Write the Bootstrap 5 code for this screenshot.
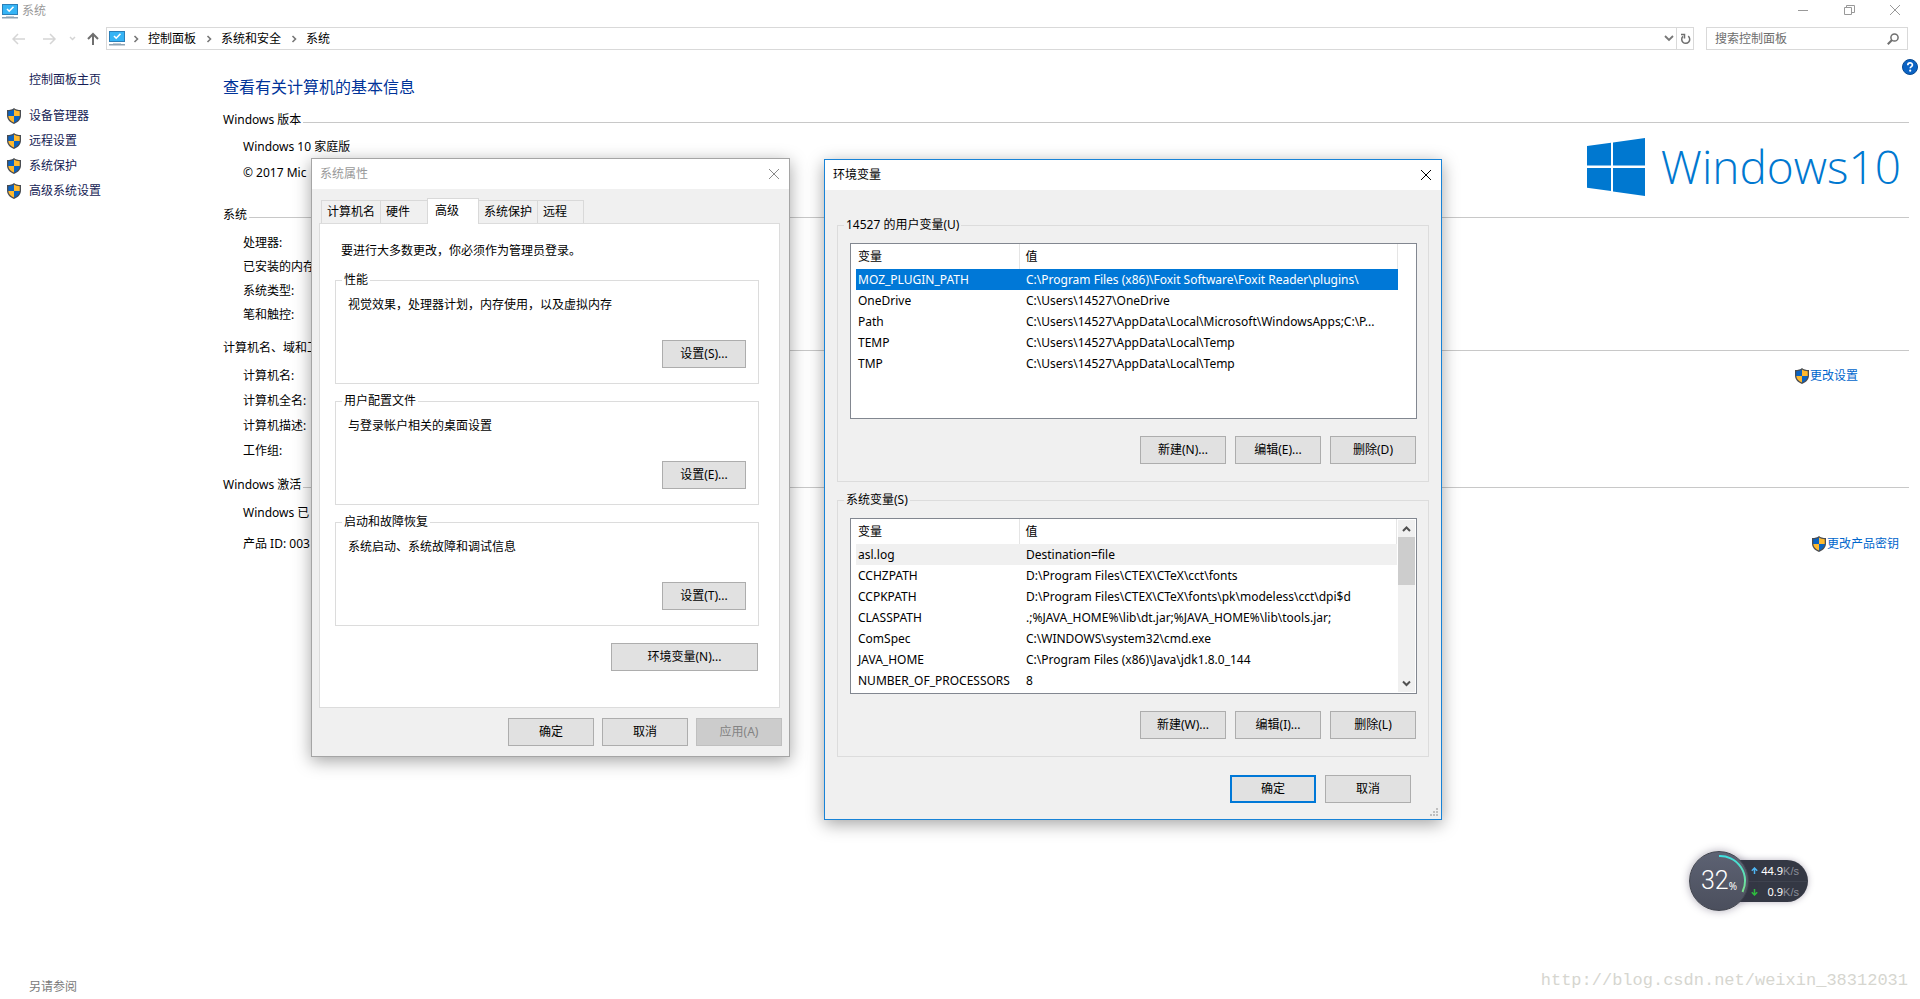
<!DOCTYPE html>
<html lang="zh-CN">
<head>
<meta charset="utf-8">
<meta name="viewport" content="width=device-width, initial-scale=1">
<title>系统</title>
<link rel="stylesheet" href="https://cdn.jsdelivr.net/npm/bootstrap@5.3.0/dist/css/bootstrap.min.css">
<style>
  body { font: 12px/16px "Noto Sans", "Noto Sans CJK SC", sans-serif; color: #000; background: #fff; }
  a { text-decoration: none; }
  svg { display: block; flex: none; }
  button { font: inherit; color: inherit; }
  .bare { border: 0; background: none; padding: 0; }

  /* window frame */
  .caption { height: 22px; padding: 0 2px; color: #999; }
  .caption-btn { width: 46px; height: 19px; }
  .nav-line { padding: 5px 12px 0 12px; height: 28px; }
  .nav-arrows { width: 94px; }
  .address, .search { height: 23px; border: 1px solid #d9d9d9; }
  .address { padding-left: 2px; }
  .address a { color: #000; }
  .address .sep { margin: 0 9px 0 10px; }
  .address .reload { width: 17px; border-left: 1px solid #d9d9d9; }
  .history { padding: 0 2px; }
  .search { width: 202px; margin-left: 12px; padding: 0 8px 0 8px; }
  .search input { border: 0; outline: 0; padding: 0; width: 100%; min-width: 0; color: #6d6d6d; }
  .search input::placeholder { color: #6d6d6d; opacity: 1; }

  /* left column */
  .tasks { width: 223px; padding: 22px 0 4px 7px; flex: none; }
  .tasks a { color: #151c55; }
  .tasks li { line-height: 25px; }
  .tasks ul { margin: 15px 0 0; }
  .indent { padding-left: 22px; }
  .see-also { color: #7a7a7a; }

  /* details */
  .details { padding: 10px 2px 0 0; }
  .page-title { font-size: 16px; line-height: 20px; color: #003399; margin: 17px 0 15px; font-weight: 400; }
  .help { margin-top: -1px; }
  .sect { margin-right: 9px; }
  .sect h2 { font-size: 12px; line-height: 16px; margin: 0; font-weight: 400; white-space: nowrap; }
  .sect h2::after { content: ""; flex: 1; height: 1px; background: #c8c8c8; margin: 4px 0 0 2px; }
  .sect .rows { padding-left: 20px; }
  .sect a { color: #0066cc; gap: 1px; }
  .rows-edition { line-height: 26px; padding-top: 6px; }
  .rows-system { line-height: 24px; padding: 8px 0 13px; }
  .rows-name { line-height: 25px; padding: 7px 0 14px; }
  .rows-activation { line-height: 31px; padding-top: 4px; }
  .edition { height: 79px; }
  .brand-area { padding: 10px 8px 0 0; }
  .winmark { font-family: "Open Sans", sans-serif; font-weight: 300; font-size: 46px; line-height: 57px; color: #0078d0; }
  .link-name { margin-right: 51px; }
  .link-key { margin-right: 10px; }

  /* dialogs */
  .dlg { background: #f0f0f0; border: 1px solid #a5a5a5; box-shadow: 0 4px 16px rgba(0,0,0,.36); z-index: 2; }
  .dlg-front { border-color: #1883d7; z-index: 3; }
  .dlg-title { background: #fff; height: 30px; padding: 0 9px 0 8px; }
  .dlg-props { left: 311px; top: 158px; width: 479px; padding-bottom: 10px; }
  .dlg-props .dlg-title { color: #999; }
  .dlg-env { left: 824px; top: 159px; width: 618px; padding-bottom: 16px; }
  .pushbtn { height: 28px; min-width: 86px; padding: 0 4px; border: 1px solid #adadad; border-radius: 0; background: #e1e1e1; }
  .pushbtn:disabled { background: #ccc; border-color: #bfbfbf; color: #838383; }
  .pushbtn.default { border: 2px solid #0078d7; }
  .set-btn { min-width: 84px; }
  .env-btn { min-width: 147px; }

  .tabs { padding: 9px 0 0 9px; }
  .tab { height: 23px; border: 1px solid #d9d9d9; border-bottom: 0; border-right: 0; background: #f0f0f0; text-align: left; padding: 0 5px; white-space: nowrap; }
  .tab-1 { width: 59px; }
  .tab-2 { width: 47px; }
  .tab-4 { width: 58px; border-left: 0; }
  .tab-last { border-right: 1px solid #d9d9d9; width: 47px; }
  .tab-on { height: 26px; width: 52px; background: #fff; border-right: 1px solid #d9d9d9; margin-bottom: -1px; z-index: 1; padding: 0 7px 2px; }
  .sheet { margin: 0 9px 0 7px; border: 1px solid #dcdcdc; background: #fff; padding: 19px 20px 36px 15px; }
  .sheet p { margin: 0 0 13px 6px; }
  .env-row { padding: 8px 1px 0 0; }
  .props-foot { padding: 10px 7px 0 0; }

  fieldset.group { border: 1px solid #dcdcdc; }
  fieldset.group legend { float: none; width: auto; font-size: 12px; line-height: 16px; margin: 0 0 0 -6px; padding: 0 2px; }
  .group-set { height: 112px; padding: 9px 12px 0 12px; margin-bottom: 9px; }
  .group-set .text-end { margin-top: 27px; }
  .group-env { margin: 10px 12px 0; padding: 10px 11px 17px 12px; }
  .group-user { margin-top: 27px; }
  .env-actions { gap: 9px; padding: 17px 1px 0 0; }
  .env-foot { gap: 9px; padding: 18px 30px 0 0; }

  .listbox { height: 176px; border: 1px solid #828790; background: #fff; padding-left: 5px; }
  .listbox table { width: 542px; table-layout: fixed; border-collapse: collapse; }
  .listbox .col-var { width: 163px; }
  .listbox th { font-weight: 400; height: 25px; padding: 1px 0 0 2px; border-right: 1px solid #e5e5e5; }
  .listbox th + th { padding-left: 6px; }
  .listbox td { height: 21px; padding: 0 2px; white-space: nowrap; }
  .listbox td + td { padding-left: 7px; }
  .listbox .sel { background: #0078d7; color: #fff; }
  .listbox .idle { background: #f0f0f0; }
  .vscroll { width: 17px; background: #f0f0f0; margin: 1px; }
  .vscroll .thumb { height: 48px; background: #cdcdcd; }
  .grip { right: 2px; bottom: 2px; }

  /* network speed widget */
  .speed { left: 1689px; top: 851px; height: 60px; z-index: 4; }
  .dial { width: 60px; height: 60px; border-radius: 50%; background: linear-gradient(#5d6273, #4b4f5d); border: 1px solid #42454f; color: #fff; box-shadow: 0 0 8px rgba(60,50,80,.4); z-index: 1; }
  .dial-num { font-family: Roboto, sans-serif; font-weight: 300; font-size: 25px; line-height: 60px; }
  .dial-pct { font-size: 10px; margin-top: 10px; }
  .pill { width: 89px; height: 42px; margin-left: -30px; padding-left: 30px; border-radius: 0 21px 21px 0; background: #343844; color: #fff; font-size: 11px; box-shadow: 0 0 6px rgba(60,50,80,.35); }
  .pill div { height: 21px; padding: 0 9px 0 2px; }
  .pill div + div { border-top: 1px solid #3f434f; }
  .unit { color: #8b8f9a; font-family: "Liberation Sans", sans-serif; }

  .watermark { right: 12px; bottom: 8px; font: 17px/20px "Liberation Mono", monospace; color: #d6d6d0; }
</style>
</head>
<body class="min-vh-100 d-flex flex-column position-relative overflow-hidden">

<svg width="0" height="0" class="position-absolute" aria-hidden="true">
  <symbol id="shield" viewBox="0 0 14 16">
    <path d="M7 0C5.500 1.500 3 2 0 2v5.500C0 11.500 3 14.500 7 16c4-1.500 7-4.500 7-8.500V2C11 2 8.500 1.500 7 0z" fill="#4a4d52"/>
    <path d="M7 1.500C5.500 2.600 3.500 3.100 1.300 3.200V8H7z" fill="#0a63c2"/>
    <path d="M7 1.500c1.500 1.100 3.500 1.600 5.700 1.700V8H7z" fill="#ffb92e"/>
    <path d="M1.300 8H7v6.600C4 13.300 1.500 11.200 1.300 8z" fill="#ffb92e"/>
    <path d="M12.700 8H7v6.600c3-1.300 5.500-3.400 5.700-6.600z" fill="#0a63c2"/>
  </symbol>
  <symbol id="monitor" viewBox="0 0 16 15">
    <rect x="0" y="0" width="16" height="11" fill="#2b7fb8"/>
    <rect x="1" y="1" width="14" height="9" fill="#35b4f5"/>
    <path d="M5 5l2.200 2.200L11.500 2.800" fill="none" stroke="#fff" stroke-width="1.600"/>
    <path d="M4 12h8v1H4z" fill="#c3cfd8"/>
    <path d="M0 13h16v1.500H0z" fill="#8fa3b3"/>
  </symbol>
  <symbol id="chev" viewBox="0 0 6 8"><path d="M1.500 1L4.500 4 1.500 7" fill="none" stroke="#777" stroke-width="1.600"/></symbol>
</svg>

<header>
  <div class="caption d-flex align-items-center">
    <svg width="16" height="15"><use href="#monitor"/></svg>
    <span class="ms-1">系统</span>
    <div class="ms-auto d-flex align-self-start">
      <button class="bare caption-btn d-flex align-items-center justify-content-center" aria-label="最小化"><svg width="10" height="10"><path d="M0 5.500h10" stroke="#999"/></svg></button>
      <button class="bare caption-btn d-flex align-items-center justify-content-center" aria-label="还原"><svg width="11" height="10" fill="none" stroke="#999"><path d="M.5 2.500h7v7h-7zM2.500 2.500v-2h8v7h-3"/></svg></button>
      <button class="bare caption-btn d-flex align-items-center justify-content-center" aria-label="关闭"><svg width="10" height="10" stroke="#999"><path d="M0 0l10 10M10 0L0 10"/></svg></button>
    </div>
  </div>
  <div class="nav-line d-flex">
    <div class="nav-arrows d-flex align-items-center">
      <svg width="94" height="23" fill="none">
        <path d="M13 12H1M6 7l-5 5 5 5" stroke="#d5d5d5" stroke-width="1.500"/>
        <path d="M31 12h12M38 7l5 5-5 5" stroke="#d5d5d5" stroke-width="1.500"/>
        <path d="M58 10l2.500 2.500L63 10" stroke="#d5d5d5" stroke-width="1.500"/>
        <path d="M81 18V7M76 12l5-5 5 5" stroke="#6f6f6f" stroke-width="2"/>
      </svg>
    </div>
    <nav class="address d-flex align-items-center flex-grow-1" aria-label="地址">
      <svg width="16" height="15"><use href="#monitor"/></svg>
      <svg width="6" height="8" class="sep ms-2"><use href="#chev"/></svg>
      <a href="#">控制面板</a>
      <svg width="6" height="8" class="sep"><use href="#chev"/></svg>
      <a href="#">系统和安全</a>
      <svg width="6" height="8" class="sep"><use href="#chev"/></svg>
      <a href="#">系统</a>
      <button class="bare history ms-auto" aria-label="历史记录"><svg width="10" height="7" fill="none"><path d="M1 1l4 4 4-4" stroke="#777" stroke-width="1.800"/></svg></button>
      <button class="bare reload h-100 d-flex align-items-center justify-content-center" aria-label="刷新"><svg width="11" height="12" fill="none" stroke="#6f6f6f" stroke-width="1.500"><path d="M8.200 3.200A4 4 0 1 1 3 3.400"/><path d="M1 1.500h3.500v4"/></svg></button>
    </nav>
    <div class="search d-flex align-items-center">
      <input type="text" placeholder="搜索控制面板" aria-label="搜索控制面板">
      <svg width="12" height="12" fill="none" stroke="#6f6f6f"><circle cx="7.500" cy="4.500" r="3.600" stroke-width="1.500"/><path d="M5 7L.8 11.200" stroke-width="2"/></svg>
    </div>
  </div>
</header>

<div class="d-flex flex-grow-1">
  <aside class="tasks d-flex flex-column">
    <a href="#" class="indent">控制面板主页</a>
    <ul class="list-unstyled">
      <li class="d-flex align-items-center gap-2"><svg width="14" height="16"><use href="#shield"/></svg><a href="#">设备管理器</a></li>
      <li class="d-flex align-items-center gap-2"><svg width="14" height="16"><use href="#shield"/></svg><a href="#">远程设置</a></li>
      <li class="d-flex align-items-center gap-2"><svg width="14" height="16"><use href="#shield"/></svg><a href="#">系统保护</a></li>
      <li class="d-flex align-items-center gap-2"><svg width="14" height="16"><use href="#shield"/></svg><a href="#">高级系统设置</a></li>
    </ul>
    <div class="indent see-also mt-auto">另请参阅</div>
  </aside>

  <main class="details flex-grow-1">
    <div class="d-flex justify-content-between align-items-start">
      <h1 class="page-title">查看有关计算机的基本信息</h1>
      <button class="bare help" aria-label="帮助"><svg width="16" height="16"><circle cx="8" cy="8" r="7.500" fill="#0b63c4" stroke="#0a4a91"/><path d="M5.800 6.200c0-3 4.600-3 4.600-.2 0 1.600-2.200 1.600-2.200 3.300" fill="none" stroke="#fff" stroke-width="1.700"/><circle cx="8.200" cy="11.700" r="1.100" fill="#fff"/></svg></button>
    </div>

    <section class="sect">
      <h2 class="d-flex align-items-center">Windows 版本</h2>
      <div class="edition d-flex justify-content-between">
        <div class="rows rows-edition"><div>Windows 10 家庭版</div><div>© 2017 Mic</div></div>
        <div class="brand-area d-flex">
          <svg width="58" height="58" fill="#0078d0" class="me-3"><path d="M0 8L24 4.700V27.500H0zM26 4.400L58 0v27.500H26zM0 30h24v23L0 49.700zM26 30h32v28l-32-4.500z"/></svg>
          <span class="winmark">Windows</span><span class="winmark">10</span>
        </div>
      </div>
    </section>

    <section class="sect">
      <h2 class="d-flex align-items-center">系统</h2>
      <div class="rows rows-system"><div>处理器:</div><div>已安装的内存</div><div>系统类型:</div><div>笔和触控:</div></div>
    </section>

    <section class="sect">
      <h2 class="d-flex align-items-center">计算机名、域和工</h2>
      <div class="rows rows-name">
        <div class="d-flex justify-content-between"><span>计算机名:</span><a href="#" class="link-name d-flex align-items-center"><svg width="14" height="16"><use href="#shield"/></svg>更改设置</a></div>
        <div>计算机全名:</div><div>计算机描述:</div><div>工作组:</div>
      </div>
    </section>

    <section class="sect">
      <h2 class="d-flex align-items-center">Windows 激活</h2>
      <div class="rows rows-activation">
        <div>Windows 已</div>
        <div class="d-flex justify-content-between"><span>产品 ID: 003</span><a href="#" class="link-key d-flex align-items-center"><svg width="14" height="16"><use href="#shield"/></svg>更改产品密钥</a></div>
      </div>
    </section>
  </main>
</div>

<div class="dlg dlg-props position-absolute" role="dialog" aria-label="系统属性">
  <div class="dlg-title d-flex align-items-center justify-content-between">系统属性
    <button class="bare" aria-label="关闭"><svg width="12" height="12" stroke="#8a8a8a"><path d="M1 1l10 10M11 1L1 11"/></svg></button>
  </div>
  <div class="tabs d-flex align-items-end" role="tablist">
    <button class="tab tab-1" role="tab">计算机名</button>
    <button class="tab tab-2" role="tab">硬件</button>
    <button class="tab tab-on position-relative" role="tab" aria-selected="true">高级</button>
    <button class="tab tab-4" role="tab">系统保护</button>
    <button class="tab tab-last" role="tab">远程</button>
  </div>
  <div class="sheet">
    <p>要进行大多数更改，你必须作为管理员登录。</p>
    <fieldset class="group group-set">
      <legend>性能</legend>
      <div>视觉效果，处理器计划，内存使用，以及虚拟内存</div>
      <div class="text-end"><button class="pushbtn set-btn">设置(S)...</button></div>
    </fieldset>
    <fieldset class="group group-set">
      <legend>用户配置文件</legend>
      <div>与登录帐户相关的桌面设置</div>
      <div class="text-end"><button class="pushbtn set-btn">设置(E)...</button></div>
    </fieldset>
    <fieldset class="group group-set">
      <legend>启动和故障恢复</legend>
      <div>系统启动、系统故障和调试信息</div>
      <div class="text-end"><button class="pushbtn set-btn">设置(T)...</button></div>
    </fieldset>
    <div class="env-row text-end"><button class="pushbtn env-btn">环境变量(N)...</button></div>
  </div>
  <div class="props-foot d-flex justify-content-end gap-2">
    <button class="pushbtn">确定</button><button class="pushbtn">取消</button><button class="pushbtn" disabled>应用(A)</button>
  </div>
</div>

<div class="dlg dlg-front dlg-env position-absolute" role="dialog" aria-label="环境变量">
  <div class="dlg-title d-flex align-items-center justify-content-between">环境变量
    <button class="bare" aria-label="关闭"><svg width="12" height="12" stroke="#000"><path d="M1 1l10 10M11 1L1 11"/></svg></button>
  </div>
  <fieldset class="group group-env group-user">
    <legend>14527 的用户变量(U)</legend>
    <div class="listbox">
      <table>
        <colgroup><col class="col-var"><col></colgroup>
        <thead><tr><th>变量</th><th>值</th></tr></thead>
        <tbody>
          <tr class="sel"><td>MOZ_PLUGIN_PATH</td><td>C:\Program Files (x86)\Foxit Software\Foxit Reader\plugins\</td></tr>
          <tr><td>OneDrive</td><td>C:\Users\14527\OneDrive</td></tr>
          <tr><td>Path</td><td>C:\Users\14527\AppData\Local\Microsoft\WindowsApps;C:\P...</td></tr>
          <tr><td>TEMP</td><td>C:\Users\14527\AppData\Local\Temp</td></tr>
          <tr><td>TMP</td><td>C:\Users\14527\AppData\Local\Temp</td></tr>
        </tbody>
      </table>
    </div>
    <div class="env-actions d-flex justify-content-end">
      <button class="pushbtn">新建(N)...</button><button class="pushbtn">编辑(E)...</button><button class="pushbtn">删除(D)</button>
    </div>
  </fieldset>
  <fieldset class="group group-env">
    <legend>系统变量(S)</legend>
    <div class="listbox d-flex justify-content-between overflow-hidden">
      <table class="align-self-start">
        <colgroup><col class="col-var"><col></colgroup>
        <thead><tr><th>变量</th><th>值</th></tr></thead>
        <tbody>
          <tr class="idle"><td>asl.log</td><td>Destination=file</td></tr>
          <tr><td>CCHZPATH</td><td>D:\Program Files\CTEX\CTeX\cct\fonts</td></tr>
          <tr><td>CCPKPATH</td><td>D:\Program Files\CTEX\CTeX\fonts\pk\modeless\cct\dpi$d</td></tr>
          <tr><td>CLASSPATH</td><td>.;%JAVA_HOME%\lib\dt.jar;%JAVA_HOME%\lib\tools.jar;</td></tr>
          <tr><td>ComSpec</td><td>C:\WINDOWS\system32\cmd.exe</td></tr>
          <tr><td>JAVA_HOME</td><td>C:\Program Files (x86)\Java\jdk1.8.0_144</td></tr>
          <tr><td>NUMBER_OF_PROCESSORS</td><td>8</td></tr>
        </tbody>
      </table>
      <div class="vscroll d-flex flex-column" aria-hidden="true">
        <svg width="17" height="17" fill="none" stroke="#505050" stroke-width="2"><path d="M5 11l3.500-3.500L12 11"/></svg>
        <div class="thumb"></div>
        <svg width="17" height="17" fill="none" stroke="#505050" stroke-width="2" class="mt-auto"><path d="M5 6.500L8.500 10 12 6.500"/></svg>
      </div>
    </div>
    <div class="env-actions d-flex justify-content-end">
      <button class="pushbtn">新建(W)...</button><button class="pushbtn">编辑(I)...</button><button class="pushbtn">删除(L)</button>
    </div>
  </fieldset>
  <div class="env-foot d-flex justify-content-end">
    <button class="pushbtn default">确定</button><button class="pushbtn">取消</button>
  </div>
  <svg width="9" height="9" fill="#bfbfbf" class="grip position-absolute" aria-hidden="true"><path d="M6 0h2v2H6zM3 3h2v2H3zM6 3h2v2H6zM0 6h2v2H0zM3 6h2v2H3zM6 6h2v2H6z"/></svg>
</div>

<div class="speed position-absolute d-flex align-items-center">
  <div class="dial position-relative d-flex align-items-center justify-content-center">
    <svg width="58" height="58" fill="none" class="position-absolute top-0 start-0"><defs><linearGradient id="arc" x1="0" y1="0" x2="0" y2="1"><stop offset="0" stop-color="#3fe0e0"/><stop offset="1" stop-color="#7be08a"/></linearGradient></defs><path d="M29 4a25 25 0 0 1 23.500 36" stroke="url(#arc)" stroke-width="2"/></svg>
    <span class="dial-num">32</span><span class="dial-pct">%</span>
  </div>
  <div class="pill">
    <div class="d-flex align-items-center"><svg width="7" height="7" fill="none" stroke="#4fb8f5" stroke-width="1.500"><path d="M3.500 7V1M.8 3.800L3.500 1l2.700 2.800"/></svg><span class="ms-auto">44.9</span><span class="unit">K/s</span></div>
    <div class="d-flex align-items-center"><svg width="7" height="7" fill="none" stroke="#2fbf3f" stroke-width="1.500"><path d="M3.500 0v6M.8 3.200L3.500 6l2.700-2.800"/></svg><span class="ms-auto">0.9</span><span class="unit">K/s</span></div>
  </div>
</div>

<div class="watermark position-absolute">http://blog.csdn.net/weixin_38312031</div>

<script src="https://cdn.jsdelivr.net/npm/bootstrap@5.3.0/dist/js/bootstrap.bundle.min.js"></script>
</body>
</html>
